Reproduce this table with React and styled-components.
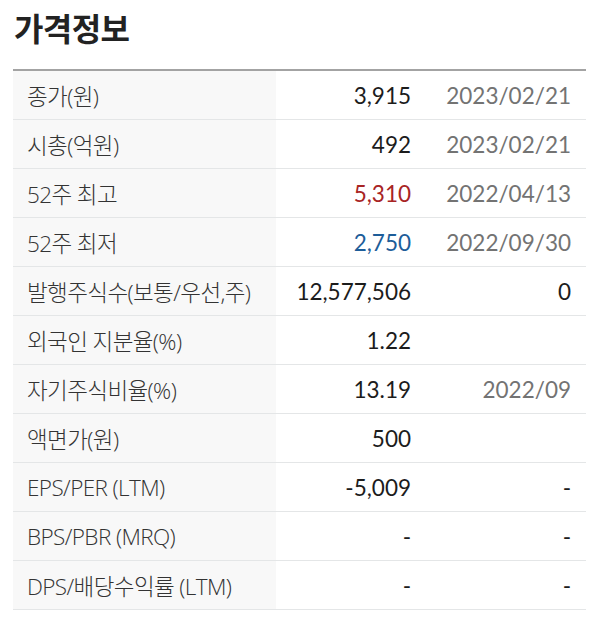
import React from "react";
import styled, { createGlobalStyle } from "styled-components";

const Global = createGlobalStyle`
  body { margin: 0; background: #fff; }
`;

const Page = styled.div`
  padding: 4px 14px 0 13px;
  width: 573px;
`;

const Title = styled.h2`
  margin: 0 0 0 1px;
  font-family: "Noto Sans CJK KR", "Noto Sans", sans-serif;
  font-weight: 700;
  font-size: 32px;
  line-height: 46px;
  color: #222;
  letter-spacing: -0.6px;
`;

const Table = styled.div`
  margin-top: 19px;
  border-top: 2px solid #a3a3a3;
`;

const Row = styled.div`
  display: grid;
  grid-template-columns: 263px 135px 160px;
  height: 48px;
  border-bottom: 1px solid #e4e6e7;
  align-items: stretch;
`;

const Label = styled.div`
  background: #f8f8f8;
  padding-left: 14px;
  display: flex;
  align-items: center;
  font-family: "Open Sans", "Noto Sans CJK KR", sans-serif;
  font-weight: 300;
  font-size: 22.5px;
  color: #333;
  letter-spacing: -0.6px;
  white-space: nowrap;
`;

const Cell = styled.div`
  display: flex;
  align-items: center;
  justify-content: flex-end;
  font-family: Lato, "Noto Sans CJK KR", sans-serif;
  font-size: 22.5px;
  white-space: nowrap;
  color: ${(p) => p.$color || "#1c1c1c"};
`;

const rows = [
  ["종가(원)", "3,915", "2023/02/21"],
  ["시총(억원)", "492", "2023/02/21"],
  ["52주 최고", "5,310", "2022/04/13", "#a82424"],
  ["52주 최저", "2,750", "2022/09/30", "#1d5d99"],
  ["발행주식수(보통/우선,주)", "12,577,506", "0", null, "#1c1c1c"],
  ["외국인 지분율(%)", "1.22", ""],
  ["자기주식비율(%)", "13.19", "2022/09"],
  ["액면가(원)", "500", ""],
  ["EPS/PER (LTM)", "-5,009", "-", null, "#1c1c1c"],
  ["BPS/PBR (MRQ)", "-", "-", null, "#1c1c1c"],
  ["DPS/배당수익률 (LTM)", "-", "-", null, "#1c1c1c"],
];

export default function App() {
  return (
    <Page>
      <Global />
      <Title>가격정보</Title>
      <Table>
        {rows.map(([l, v, d, vc, dc]) => (
          <Row key={l}>
            <Label>{l}</Label>
            <Cell $color={vc}>{v}</Cell>
            <Cell $color={dc || "#737373"}>{d}</Cell>
          </Row>
        ))}
      </Table>
    </Page>
  );
}
